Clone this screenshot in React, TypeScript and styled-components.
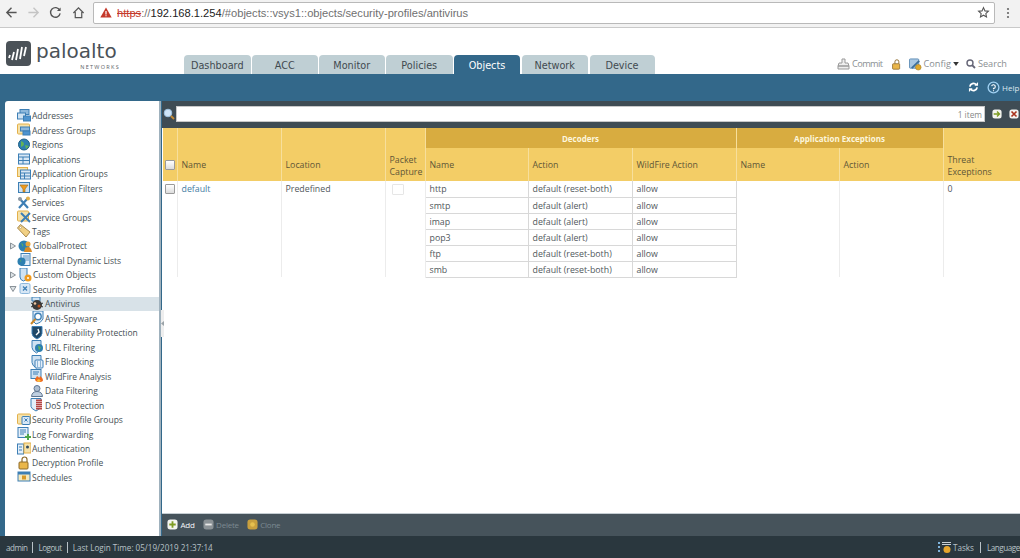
import React from 'react';
import styled, { createGlobalStyle } from 'styled-components';

const Global = createGlobalStyle`
  html, body { margin: 0; padding: 0; height: 100%; overflow: hidden; background: #fff; }
  body { font-family: "Open Sans", "Liberation Sans", sans-serif; }
  * { box-sizing: border-box; }
`;

const Page = styled.div`
  width: 1020px; height: 558px; display: flex; flex-direction: column; overflow: hidden;
`;
const Svg = styled.svg` flex: none; display: block; `;
const Chrome = styled.div`
  height: 28px; flex: none; background: #f2f2f2; border-bottom: 1px solid #c9c9c9;
  display: flex; align-items: center; padding: 0 0 2px 0;
`;
const NavBtn = styled.div`
  width: 22.4px; height: 20px; display: flex; align-items: center; justify-content: center; flex: none;
`;
const NavGroup = styled.div` display: flex; width: 93px; flex: none; `;
const UrlBox = styled.div`
  width: 902px; height: 22px; flex: none; background: #fff; border: 1px solid #b9b9b9; border-radius: 2px;
  display: flex; align-items: center; padding: 0 4px 0 6px;
  font-family: "Liberation Sans", sans-serif; font-size: 11.15px; color: #707070;
`;
const Scheme = styled.span` color: #c5392b; text-decoration: line-through; margin-left: 5px; `;
const Host = styled.span` color: #222; `;
const UrlFill = styled.div` flex: 1; display: flex; align-items: center; `;
const Kebab = styled.div` flex: 1; display: flex; align-items: center; justify-content: center; `;
const Header = styled.div`
  height: 46px; flex: none; background: #fff; display: flex; align-items: flex-end;
`;
const Logo = styled.div` width: 184px; height: 46px; flex: none; padding: 13px 0 0 6px; display: flex; gap: 5px; `;
const LogoText = styled.div`
  display: flex; flex-direction: column; color: #4b5258; align-items: flex-end; width: 85px;
`;
const LogoWord = styled.div`
  font-family: "DejaVu Sans", sans-serif; font-size: 20px; line-height: 22px; width: 85px; margin-top: -1px;
`;
const LogoSub = styled.div`
  font-family: "Open Sans", sans-serif; font-size: 5.5px; line-height: 6px; letter-spacing: 1.3px; margin-top: 2px; margin-right: 1px; color: #5b6267;
`;
const Tabs = styled.div` display: flex; gap: 1.5px; align-items: flex-end; `;
const Tab = styled.div<{ $active?: boolean; $w: number }>`
  width: ${p => p.$w}px; height: 19px; border-radius: 4px 4px 0 0;
  background: ${p => (p.$active ? '#33688a' : '#bfcfd4')};
  color: ${p => (p.$active ? '#fff' : '#3f4a50')};
  font-family: "DejaVu Sans", sans-serif; font-size: 9.7px; line-height: 21px; text-align: center;
`;
const HeaderTools = styled.div`
  margin-left: auto; height: 46px; display: flex; align-items: flex-start; padding: 30px 13px 0 0;
  font-size: 9.2px; color: #8a8f92; line-height: 12px;
`;
const ToolItem = styled.span<{ $gap?: number; $tight?: boolean }>`
  display: inline-flex; align-items: center; gap: 2px; height: 12px; margin-right: ${p => p.$gap ?? 0}px;
  letter-spacing: ${p => (p.$tight ? '-0.55px' : '0')};
`;
const BlueBar = styled.div`
  height: 27px; flex: none; background: #33688a; display: flex; justify-content: flex-end; align-items: center;
  gap: 8px; color: #dfe8ee; font-size: 8px; padding-bottom: 1px;
`;
const HelpWrap = styled.span` display: inline-flex; align-items: center; gap: 2px; width: 33px; `;
const Main = styled.div` flex: 1; min-height: 0; display: flex; background: #33688a; padding-left: 5px; `;
const Side = styled.div`
  width: 156px; flex: none; background: #fff; padding-top: 7.5px; border-right: 2px solid #9fb1bd; margin-right: 1px; position: relative;
  border-radius: 3px 0 0 0;
`;
const TreeRow = styled.div<{ $sel?: boolean; $indent: number }>`
  height: 14.48px; display: flex; align-items: center; padding-left: ${p => p.$indent}px;
  background: ${p => (p.$sel ? '#d8e2e8' : 'transparent')};
  font-size: 8.5px; color: #465055; white-space: nowrap; gap: 1px;
`;
const Arrow = styled.span` width: 8px; flex: none; display: flex; margin-left: -8px; `;
const Splitter = styled.div`
  position: absolute; right: -5px; top: 209px; width: 3px; height: 27px; background: #eeeeee; z-index: 1;
  display: flex; align-items: center; justify-content: center;
`;
const Content = styled.div` flex: 1; min-width: 0; display: flex; flex-direction: column; background: #fff; `;
const FilterBar = styled.div`
  height: 27px; flex: none; background: #3f4c54; display: flex; align-items: center; padding: 0 1px 1px 1px; gap: 1px;
`;
const FilterInput = styled.div`
  width: 809px; height: 16px; background: #fff; border: 1px solid #c8c8c8; display: flex; align-items: center; justify-content: flex-end;
  padding-right: 2px; font-size: 8.3px; color: #888; margin-right: 6px;
`;
const FilterBtn = styled.span` margin-right: 6px; flex: none; display: flex; `;
const Table = styled.table`
  border-collapse: collapse; table-layout: fixed; width: 858px; font-size: 8.8px; color: #51585c;
`;
const Col = styled.col<{ $w: number }>` width: ${p => p.$w}px; `;
const Th = styled.th`
  background: #f3cd66; color: #5f5637; font-weight: 400; text-align: left;
  height: 33px; padding: 0 4px; vertical-align: middle; line-height: 12px;
  border-right: 1px solid #f7df9c; font-size: 8.8px;
`;
const GroupTh = styled(Th)`
  background: #d8ac40; color: #fdf6dd; font-weight: 700; text-align: center; height: 20px; font-size: 8px; padding-top: 1px;
`;
const TallTh = styled(Th)` height: 53px; vertical-align: bottom; padding-bottom: 3px; `;
const CheckTh = styled(TallTh)` padding: 0 0 11px 0; `;
const LowTh = styled(TallTh)` padding-bottom: 10px; `;
const Td = styled.td<{ $boxed?: boolean; $last?: boolean }>`
  height: 16px; padding: 2px 4px 0; line-height: 13px; vertical-align: top; overflow: hidden; white-space: nowrap;
  border-right: ${p => (p.$last ? 'none' : `1px solid ${p.$boxed ? '#d8d8d8' : '#ececec'}`)};
  border-bottom: ${p => (p.$boxed ? '1px solid #d8d8d8' : 'none')};
  ${p => (p.$boxed ? 'border-left: 1px solid #d8d8d8;' : '')}
`;
const CheckTd = styled(Td)` padding: 0; `;
const Link = styled.span` color: #3f7ba3; `;
const Box = styled.span`
  display: block; width: 10px; height: 10px; margin: 3px auto 0; border: 1px solid #9a9a9a;
  background: linear-gradient(#fff, #dcdcdc); border-radius: 1px;
`;
const HeadBox = styled(Box)` margin: 0 auto; `;
const FaintBox = styled.span`
  display: block; width: 12px; height: 11px; margin: 1px 0 0 2px; border: 1px solid #e6e6e6; background: #fff; border-radius: 1px;
`;
const TableWrap = styled.div` flex: 1; min-height: 0; padding: 0 0 0 1px; `;
const ActionBar = styled.div`
  height: 23px; flex: none; background: #46535b; border-top: 1px solid #c5cdd2; display: flex; align-items: center;
  padding: 0 0 1px 5px; gap: 8px; font-size: 8px; color: #7c8a92; letter-spacing: -0.25px;
`;
const Action = styled.span<{ $on?: boolean }>`
  display: inline-flex; align-items: center; gap: 2.5px; color: ${p => (p.$on ? '#f4f6f7' : '#7c8a92')};
`;
const Status = styled.div`
  height: 22px; flex: none; background: #2a373e; display: flex; align-items: center; padding: 0 0 0 6px;
  font-size: 8.1px; color: #b9c2c7; white-space: nowrap;
`;
const Sep = styled.span` width: 1px; height: 11px; background: #b9c2c7; margin: 0 5px; flex: none; `;
const Tight = styled.span<{ $ls: number }>` letter-spacing: ${p => p.$ls}px; `;
const StatusRight = styled.div` margin-left: auto; display: flex; align-items: center; gap: 1px; width: 82px; flex: none; `;

type K = string;
const I = ({ k, s = 14 }: { k: K; s?: number }) => {
  const g = '#3d7fb5', y = '#e3b04a', o = '#ef9a1e', b = '#8db8dc', d = '#344a5c';
  const shape: Record<string, React.ReactNode> = {
    addr: <><rect x="3" y="0.5" width="9" height="5" fill={b} stroke={g} /><rect x="0.500" y="4" width="8" height="6" fill="#cfe2f2" stroke={g} /><rect x="6.500" y="7" width="7" height="5" fill="#4f94cf" stroke={g} /></>,
    addrg: <><rect x="0.500" y="1" width="12" height="10" rx="1" fill="#f5e2ab" stroke={y} /><rect x="3.500" y="4" width="9" height="4" fill={b} stroke={g} /><rect x="6" y="8" width="7" height="4" fill="#4f94cf" stroke={g} /></>,
    globe: <><circle cx="7" cy="6.500" r="5.500" fill="#2d7fb0" stroke="#1e5f87" /><path d="M4 3q3 1 3 3t-3 3zM8 7l4 1-3 3z" fill="#62b356" /></>,
    grid: <><rect x="1.500" y="2" width="11" height="10" fill="#d7e7f5" stroke={g} /><path d="M1.500 5h11M1.500 8.500h11M6 5v7" stroke={g} /></>,
    gridg: <><rect x="0.500" y="0.500" width="10" height="9" fill="#f5e2ab" stroke={y} /><rect x="3.500" y="3" width="10" height="9" fill="#d7e7f5" stroke={g} /><path d="M3.500 6h10M3.500 9h10M7.500 6v6" stroke={g} /></>,
    filter: <><rect x="1.500" y="1.500" width="11" height="10" fill="#cfe2f2" stroke={g} /><path d="M3 4h8L8 8v3H6V8z" fill={o} stroke="#9a6d1d" strokeWidth=".6" /></>,
    tools: <><path d="M2 12 11 2M2 2l9 10" stroke={g} strokeWidth="2.200" /><circle cx="11" cy="2.500" r="2" fill={y} /><circle cx="3" cy="3" r="2" fill="#8f9aa3" /></>,
    toolsg: <><rect x="0.500" y="1" width="11" height="10" rx="1" fill="#f5e2ab" stroke={y} /><path d="M4 12 13 3M4 3l9 9" stroke={g} strokeWidth="2" /></>,
    tag: <><path d="M0.500 4 3.500 .5l9.500 7.500-4 5z" fill="#f1d084" stroke="#a98a4e" /><circle cx="3.500" cy="3.500" r="1" fill="#fff" stroke="#a98a4e" strokeWidth=".5" /></>,
    gp: <><circle cx="6" cy="7" r="5.500" fill="#2d7fb0" /><path d="M3 4q3 1 2 4zM7 8l3 2-3 2z" fill="#62b356" /><circle cx="10" cy="5" r="2.500" fill="#e7a53b" /><path d="M6 13q1-5 4-5t4 5z" fill="#d98b27" /></>,
    edl: <><rect x="4" y="0.500" width="9" height="12" fill="#e4effa" stroke={g} /><path d="M6 3h6M6 5h6M6 7h6" stroke={g} strokeWidth=".8" /><circle cx="4.500" cy="8.500" r="4" fill="#2d7fb0" /><path d="M3 6.500q2 1 1 3z" fill="#62b356" /></>,
    custom: <><path d="M2 0h7v9q0 3-3.500 4Q2 12 2 9z" fill="#cfe2f2" stroke={g} /><circle cx="10" cy="10" r="3.500" fill={o} /><circle cx="10" cy="10" r="1" fill="#fff" /></>,
    shield: <><rect x="2" y="1.500" width="10" height="10" rx="1.500" fill="#d7e7f5" stroke={b} /><path d="M5 4.500l4 4M9 4.500l-4 4" stroke={g} strokeWidth="1.300" /></>,
    bug: <><path d="M2 0h8v4H2z" fill="#cfe2f2" stroke={g} /><circle cx="7" cy="8" r="5" fill="#3a3a3a" /><circle cx="5" cy="6.500" r="1.300" fill="#ecc5a0" /><circle cx="9" cy="9" r="1.500" fill="#c0541e" /><path d="M1 6l2 1M1 10l2-1M13 6l-2 1M13 10l-2-1" stroke="#333" /></>,
    spy: <><path d="M3 0h10v8q-2 4-7 5L3 10z" fill="#e4effa" stroke={g} /><circle cx="8" cy="5.500" r="3.200" fill="#fff" stroke={g} strokeWidth="1.400" /><path d="M5.500 8 1 13" stroke="#c78529" strokeWidth="2" /></>,
    vuln: <><path d="M2 0.500h10v7q0 3-5 5.500Q2 10.500 2 7.500z" fill="#1f4868" stroke={g} /><path d="M8 3l1 3-3 3" stroke="#fff" strokeWidth="1.400" fill="none" /></>,
    url: <><path d="M2 0.500h9v7q0 3-4.500 5.500Q2 10.500 2 7.500z" fill="#cfe2f2" stroke={g} /><circle cx="9" cy="8" r="4" fill="#2d7fb0" /><path d="M8 5.500l3 2-2 3z" fill="#62b356" /></>,
    file: <><path d="M2 0.500h9v7q0 3-4.500 5.500Q2 10.500 2 7.500z" fill="#cfe2f2" stroke={g} /><rect x="5" y="5" width="8" height="8" rx="1" fill="#e4effa" stroke={g} /><path d="M7 7h1M10 7h1M7 9h1M10 9h1M7 11h1M10 11h1" stroke={g} /></>,
    fire: <><rect x="1" y="0.500" width="10" height="9" fill="#cfe2f2" stroke={g} /><path d="M3 3h6M3 5h5" stroke={g} /><path d="M9 13q-4 0-4-3 1-1 2-3 2 1 2 2 1-1 1-2 3 2 3 4t-4 2z" fill="#ee6a1f" /><path d="M9 13q-2 0-2-2l2-1 2 2z" fill="#fbc23f" /></>,
    person: <><circle cx="7" cy="4.500" r="3" fill="#aebfd2" stroke="#5f7590" /><path d="M1.500 12.500q.5-5 5.500-5t5.500 5z" fill="#bfcfe0" stroke="#5f7590" /></>,
    dos: <><path d="M1 0.500h10v8q0 2-5 4.500Q1 10.500 1 8.500z" fill="#e4effa" stroke={g} /><rect x="6" y="1.500" width="6" height="10" fill="#b34444" /><path d="M6 3.500h6M6 5.500h6M6 7.500h6M6 9.500h6" stroke="#f1d0d0" strokeWidth=".7" /></>,
    spg: <><rect x="0.500" y="1" width="13" height="10" rx="1" fill="#f5e2ab" stroke={y} /><rect x="5" y="3.500" width="8" height="8" rx="1" fill="#d7e7f5" stroke={g} /><path d="M7.500 5.500l3 3M10.500 5.500l-3 3" stroke={g} /></>,
    log: <><rect x="1" y="0.500" width="10" height="10" fill="#e4effa" stroke={g} /><path d="M3 3h6M3 5h6M3 7h4" stroke={g} /><path d="M10 7v2H8v2h2v2h2v-2h2V9h-2V7z" fill="#4fa64a" /></>,
    auth: <><rect x="0.500" y="2" width="6" height="10" fill="#e4effa" stroke={g} /><rect x="7" y="1" width="7" height="10" fill="#f5e2ab" stroke={y} /><path d="M2 5h3M2 8h3" stroke={g} /><circle cx="10.500" cy="5" r="1.500" fill={d} /></>,
    lock: <><path d="M5 6V3.500a2.500 2.500 0 0 1 5 0V6" fill="none" stroke="#8d6a2a" strokeWidth="1.200" /><rect x="2" y="6" width="9" height="7" rx="1" fill="#eab64a" stroke="#8d6a2a" /></>,
    cal: <><rect x="1" y="2" width="12" height="9" fill="#f7e9bc" stroke={g} /><rect x="1" y="2" width="12" height="2.500" fill={g} /><rect x="5" y="5.500" width="4" height="4" fill="#d79a29" /></>,
    config: <><rect x="0.500" y="1" width="10" height="10" rx="1" fill="#a9c8e4" stroke="#5e8db5" /><path d="M3 11 11 3" stroke="#3d6f9c" strokeWidth="2" /><circle cx="10" cy="10" r="3" fill="#e0a92e" stroke="#a67b1c" strokeWidth=".6" /></>,
  };
  return <Svg width={s} height={s} viewBox="0 0 14 14">{shape[k]}</Svg>;
};
const Tri = ({ open }: { open?: boolean }) => (
  <Svg width="8" height="8" viewBox="0 0 8 8">
    {open ? <path d="M1 1.500h6L4 6.500z" fill="#dde3e6" stroke="#8a9298" /> : <path d="M1.500 1v6L6.500 4z" fill="#dde3e6" stroke="#8a9298" />}
  </Svg>
);

const tree: { k: K; t: string; i: number; a?: 'o' | 'c'; sel?: boolean }[] = [
  { k: 'addr', t: 'Addresses', i: 12 }, { k: 'addrg', t: 'Address Groups', i: 12 }, { k: 'globe', t: 'Regions', i: 12 },
  { k: 'grid', t: 'Applications', i: 12 }, { k: 'gridg', t: 'Application Groups', i: 12 }, { k: 'filter', t: 'Application Filters', i: 12 },
  { k: 'tools', t: 'Services', i: 12 }, { k: 'toolsg', t: 'Service Groups', i: 12 }, { k: 'tag', t: 'Tags', i: 12 },
  { k: 'gp', t: 'GlobalProtect', i: 12, a: 'c' }, { k: 'edl', t: 'External Dynamic Lists', i: 12 }, { k: 'custom', t: 'Custom Objects', i: 12, a: 'c' },
  { k: 'shield', t: 'Security Profiles', i: 12, a: 'o' }, { k: 'bug', t: 'Antivirus', i: 25, sel: true }, { k: 'spy', t: 'Anti-Spyware', i: 25 },
  { k: 'vuln', t: 'Vulnerability Protection', i: 25 }, { k: 'url', t: 'URL Filtering', i: 25 }, { k: 'file', t: 'File Blocking', i: 25 },
  { k: 'fire', t: 'WildFire Analysis', i: 25 }, { k: 'person', t: 'Data Filtering', i: 25 }, { k: 'dos', t: 'DoS Protection', i: 25 },
  { k: 'spg', t: 'Security Profile Groups', i: 12 }, { k: 'log', t: 'Log Forwarding', i: 12 }, { k: 'auth', t: 'Authentication', i: 12 },
  { k: 'lock', t: 'Decryption Profile', i: 12 }, { k: 'cal', t: 'Schedules', i: 12 },
];
const tabs: [string, number][] = [['Dashboard', 66.5], ['ACC', 65.5], ['Monitor', 65.5], ['Policies', 66.5], ['Objects', 66], ['Network', 66.5], ['Device', 65]];
const rows = [['http', 'default (reset-both)'], ['smtp', 'default (alert)'], ['imap', 'default (alert)'], ['pop3', 'default (alert)'], ['ftp', 'default (reset-both)'], ['smb', 'default (reset-both)']];
const cols = [14, 104, 104, 40, 103, 104, 104, 103, 104, 78];

const Dot = ({ c, kind, s = 11 }: { c: string; kind: 'plus' | 'minus' | 'clone' | 'go' | 'x'; s?: number }) => (
  <Svg width={s} height={s} viewBox="0 0 12 12">
    <rect x="0.500" y="0.500" width="11" height="11" rx="3" fill={kind === 'clone' ? '#c9a03e' : kind === 'minus' ? '#8b9296' : '#f4f4f0'} />
    {kind === 'plus' && <path d="M6 2.500v7M2.500 6h7" stroke={c} strokeWidth="2" />}
    {kind === 'minus' && <path d="M2.500 6h7" stroke={c} strokeWidth="2" />}
    {kind === 'clone' && <circle cx="6" cy="6" r="2.500" fill={c} />}
    {kind === 'go' && <path d="M2 6h6M6 3l3 3-3 3" stroke={c} strokeWidth="1.600" fill="none" />}
    {kind === 'x' && <path d="M3 3l6 6M9 3l-6 6" stroke={c} strokeWidth="2" />}
  </Svg>
);

export default function App() {
  return (
    <Page>
      <Global />
      <Chrome>
        <NavGroup>
          <NavBtn><Svg width="13" height="13" viewBox="0 0 14 14"><path d="M12.500 7H2M7 2 2 7l5 5" stroke="#555" strokeWidth="1.500" fill="none" /></Svg></NavBtn>
          <NavBtn><Svg width="13" height="13" viewBox="0 0 14 14"><path d="M1.500 7H12M7 2l5 5-5 5" stroke="#c4c4c4" strokeWidth="1.500" fill="none" /></Svg></NavBtn>
          <NavBtn><Svg width="13" height="13" viewBox="0 0 14 14"><path d="M11.500 4.500A5.200 5.200 0 1 0 12 8" stroke="#555" strokeWidth="1.500" fill="none" /><path d="M12.500 1.500v4h-4z" fill="#555" /></Svg></NavBtn>
          <NavBtn><Svg width="13" height="13" viewBox="0 0 14 14"><path d="M1.500 7.500 7 2l5.500 5.500M3.500 6.500v6h7v-6" stroke="#555" strokeWidth="1.300" fill="none" /></Svg></NavBtn>
        </NavGroup>
        <UrlBox>
          <UrlFill>
            <Svg width="12" height="11" viewBox="0 0 12 11"><path d="M6 .5 11.700 10.500H.3z" fill="#c5392b" /><path d="M6 4v3.500M6 8.200v1.100" stroke="#fff" strokeWidth="1.200" /></Svg>
            <Scheme>https</Scheme>://<Host>192.168.1.254</Host>/#objects::vsys1::objects/security-profiles/antivirus
          </UrlFill>
          <Svg width="13" height="13" viewBox="0 0 24 24"><path d="m12 3 2.700 6 6.300.7-4.700 4.300 1.300 6.300L12 17l-5.600 3.300L7.700 14 3 9.700 9.300 9z" fill="none" stroke="#555" strokeWidth="2" /></Svg>
        </UrlBox>
        <Kebab><Svg width="4" height="12" viewBox="0 0 4 12"><circle cx="2" cy="2" r="1.100" fill="#666" /><circle cx="2" cy="6" r="1.100" fill="#666" /><circle cx="2" cy="10" r="1.100" fill="#666" /></Svg></Kebab>
      </Chrome>
      <Header>
        <Logo>
          <Svg width="25" height="25" viewBox="0 0 25 25">
            <rect width="25" height="25" rx="4" fill="#4b5258" />
            <path d="M3 17l1-3M6 19l2-8M10 19l2-11M14 18l2-12M18 15l2-9" stroke="#fff" strokeWidth="1.800" />
          </Svg>
          <LogoText>
            <LogoWord>paloalto</LogoWord>
            <LogoSub>NETWORKS</LogoSub>
          </LogoText>
        </Logo>
        <Tabs>{tabs.map(([t, w]) => <Tab key={t} $w={w} $active={t === 'Objects'}>{t}</Tab>)}</Tabs>
        <HeaderTools>
          <ToolItem $gap={8} $tight><Svg width="13" height="12" viewBox="0 0 13 12"><path d="M5 1h3v4h3l1 3H1l1-3h3zM1 8h11v3H1z" fill="#eee" stroke="#999" /></Svg>Commit</ToolItem>
          <ToolItem $gap={7}><I k="lock" s={11} /></ToolItem>
          <ToolItem $gap={7}><I k="config" s={13} />Config<Svg width="6" height="4" viewBox="0 0 7 5"><path d="M0 0h7L3.500 5z" fill="#333" /></Svg></ToolItem>
          <ToolItem><Svg width="10" height="10" viewBox="0 0 10 10"><circle cx="4" cy="4" r="3" fill="none" stroke="#667" strokeWidth="1.400" /><path d="M6 6l3 3" stroke="#667" strokeWidth="1.800" /></Svg>Search</ToolItem>
        </HeaderTools>
      </Header>
      <BlueBar>
        <Svg width="11" height="10" viewBox="0 0 12 11"><path d="M2 5a4 4 0 0 1 7-2M10 6a4 4 0 0 1-7 2" stroke="#fff" strokeWidth="2" fill="none" /><path d="M11 0v4H7zM1 11V7h4z" fill="#fff" /></Svg>
        <HelpWrap><Svg width="13" height="13" viewBox="0 0 14 14"><circle cx="7" cy="7" r="5.800" fill="#33688a" stroke="#9fd0f2" strokeWidth="1.400" /><path d="M5 5.500A2 2 0 1 1 7 8v1M7 10v1" stroke="#fff" strokeWidth="1.200" fill="none" /></Svg>Help</HelpWrap>
      </BlueBar>
      <Main>
        <Side>
          {tree.map(r => (
            <TreeRow key={r.t} $indent={r.i} $sel={r.sel}>
              {r.a && <Arrow><Tri open={r.a === 'o'} /></Arrow>}
              <I k={r.k} />{r.t}
            </TreeRow>
          ))}
          <Splitter><Svg width="3" height="5" viewBox="0 0 3 5"><path d="M3 0v5L0 2.500z" fill="#9aa3a8" /></Svg></Splitter>
        </Side>
        <Content>
          <FilterBar>
            <Svg width="12" height="12" viewBox="0 0 12 12"><circle cx="5" cy="5" r="3.800" fill="#cfe4f7" stroke="#9fc2e0" /><path d="M8 8l3 3" stroke="#c58a34" strokeWidth="2" /></Svg>
            <FilterInput>1 item</FilterInput>
            <FilterBtn><Dot c="#7a9a20" kind="go" s={10} /></FilterBtn>
            <Dot c="#a8321c" kind="x" s={10} />
          </FilterBar>
          <TableWrap>
            <Table>
              <colgroup>{cols.map((w, i) => <Col key={i} $w={w} />)}</colgroup>
              <thead>
                <tr>
                  <CheckTh rowSpan={2}><HeadBox /></CheckTh>
                  <LowTh rowSpan={2}>Name</LowTh>
                  <LowTh rowSpan={2}>Location</LowTh>
                  <TallTh rowSpan={2}>Packet Capture</TallTh>
                  <GroupTh colSpan={3}>Decoders</GroupTh>
                  <GroupTh colSpan={2}>Application Exceptions</GroupTh>
                  <TallTh rowSpan={2}>Threat Exceptions</TallTh>
                </tr>
                <tr><Th>Name</Th><Th>Action</Th><Th>WildFire Action</Th><Th>Name</Th><Th>Action</Th></tr>
              </thead>
              <tbody>
                {rows.map((r, i) => (
                  <tr key={r[0]}>
                    {i === 0 && <>
                      <CheckTd rowSpan={6}><Box /></CheckTd>
                      <Td rowSpan={6}><Link>default</Link></Td>
                      <Td rowSpan={6}>Predefined</Td>
                      <Td rowSpan={6}><FaintBox /></Td>
                    </>}
                    <Td $boxed>{r[0]}</Td><Td $boxed>{r[1]}</Td><Td $boxed>allow</Td>
                    {i === 0 && <>
                      <Td rowSpan={6} />
                      <Td rowSpan={6} />
                      <Td rowSpan={6} $last>0</Td>
                    </>}
                  </tr>
                ))}
              </tbody>
            </Table>
          </TableWrap>
          <ActionBar>
            <Action $on><Dot c="#7f9c24" kind="plus" />Add</Action>
            <Action><Dot c="#e8e8e8" kind="minus" />Delete</Action>
            <Action><Dot c="#e7c14f" kind="clone" />Clone</Action>
          </ActionBar>
        </Content>
      </Main>
      <Status>
        <Tight $ls={-0.5}>admin</Tight><Sep /><Tight $ls={-0.5}>Logout</Tight><Sep />Last Login Time: 05/19/2019 21:37:14
        <StatusRight>
          <Svg width="14" height="13" viewBox="0 0 14 13"><path d="M1 1v2M1 5v2M1 9v2" stroke="#7fb4dd" strokeWidth="2" /><path d="M4 1.500h9M4 3.500h9" stroke="#c9d0d4" /><circle cx="9" cy="8.500" r="3.500" fill="#e6a52c" /></Svg>
          Tasks<Sep /><Tight $ls={-0.45}>Language</Tight>
        </StatusRight>
      </Status>
    </Page>
  );
}
